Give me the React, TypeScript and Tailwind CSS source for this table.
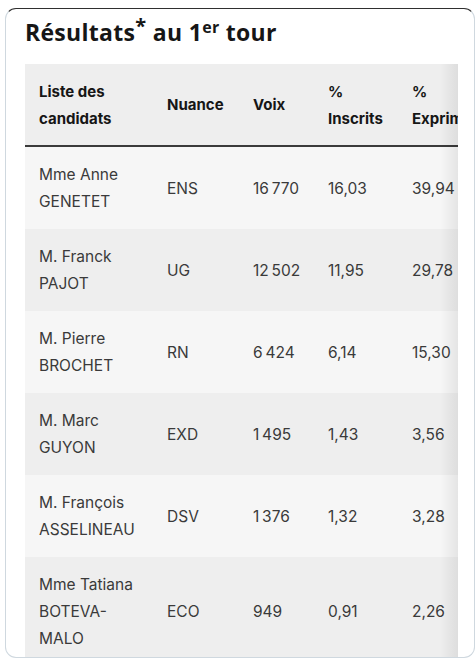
import React from "react";

const rows: [string[], string, string, string, string][] = [
  [["Mme Anne", "GENETET"], "ENS", "16\u202f770", "16,03", "39,94"],
  [["M. Franck", "PAJOT"], "UG", "12\u202f502", "11,95", "29,78"],
  [["M. Pierre", "BROCHET"], "RN", "6\u202f424", "6,14", "15,30"],
  [["M. Marc", "GUYON"], "EXD", "1\u202f495", "1,43", "3,56"],
  [["M. François", "ASSELINEAU"], "DSV", "1\u202f376", "1,32", "3,28"],
  [["Mme Tatiana", "BOTEVA-", "MALO"], "ECO", "949", "0,91", "2,26"],
];

export default function App() {
  return (
    <div className="w-[475px] h-[663px] bg-white overflow-hidden" style={{ fontFamily: "Inter, 'Noto Sans', sans-serif" }}>
      <div className="ml-[5px] mt-[8px] w-[470px] h-[650px] rounded-[11px] border border-[#cfd8df] border-t-[#2f2f2f] overflow-hidden bg-white">
        <h1
          className="pl-[19px] pt-[7px] h-[39px] text-[23px] leading-[32px] font-bold text-[#161616] tracking-[0.3px]"
          style={{ fontFamily: "'Open Sans', Inter, sans-serif" }}
        >
          Résultats<span className="text-[20px] relative -top-[8px]">*</span> au 1<span className="text-[16px] font-bold relative -top-[8px]">er</span> tour
        </h1>
        <div className="relative ml-[19px] mt-[16px] w-[433px] overflow-hidden">
          <table className="border-collapse leading-[27px] text-left table-fixed w-[520px]">
            <colgroup>
              <col className="w-[128px]" />
              <col className="w-[86px]" />
              <col className="w-[75px]" />
              <col className="w-[84px]" />
              <col className="w-[147px]" />
            </colgroup>
            <thead>
              <tr className="bg-[#eeeeee] h-[82px] border-b-2 border-[#3a3a3a] text-[#161616] text-[15px]">
                <th className="pl-[14px] font-bold">Liste des<br />candidats</th>
                <th className="pl-[14px] font-bold">Nuance</th>
                <th className="pl-[14px] font-bold">Voix</th>
                <th className="pl-[14px] font-bold">%<br />Inscrits</th>
                <th className="pl-[14px] font-bold">%<br />Exprimés</th>
              </tr>
            </thead>
            <tbody className="text-[#3a3a3a] text-[15.5px]">
              {rows.map((r, i) => (
                <tr key={i} className={i % 2 === 0 ? "bg-[#f6f6f6]" : "bg-[#eeeeee]"}>
                  <td className="pl-[14px] py-[14px] align-middle">
                    {r[0].map((l, j) => (
                      <div key={j}>{l}</div>
                    ))}
                  </td>
                  <td className="pl-[14px]">{r[1]}</td>
                  <td className="pl-[14px]">{r[2]}</td>
                  <td className="pl-[14px]">{r[3]}</td>
                  <td className="pl-[14px]">{r[4]}</td>
                </tr>
              ))}
            </tbody>
          </table>
          <div className="absolute top-0 right-0 bottom-0 w-[18px] bg-gradient-to-r from-transparent to-[#00000012]" />
        </div>
      </div>
    </div>
  );
}
